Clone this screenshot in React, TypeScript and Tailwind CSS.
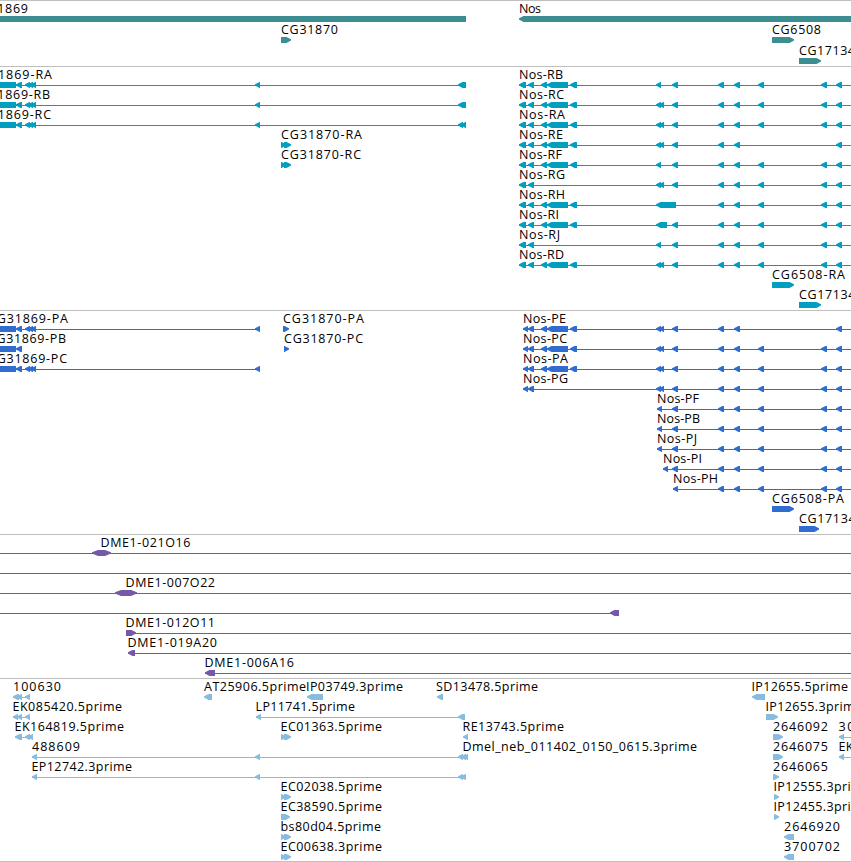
type Exon = [number, number, string?];
type Feature = {
  label?: string;
  x?: number;
  end?: number;
  line?: [number, number];
  exons?: Exon[];
};
type Track = { name: string; color: string; rows: Feature[][] };

// exon directions: L (default), R, B = block without head, D = head on both sides
const HEAD = 4.5;

const tail: Exon[] = [[519, 526], [528, 534]];
const shortTail: Exon[] = [[523, 528], [528, 534]];
const coding: Exon[] = [[541, 547], [547, 568], [570, 577]];
const single: Exon[] = [[656, 661]];
const pair: Exon[] = [[656, 661], [659, 664]];
const mid: Exon[] = [[672, 678]];
const rest: Exon[] = [[718, 724], [734, 740], [758, 764], [821, 827], [836, 842]];
const restShort: Exon[] = [[718, 724], [734, 740], [836, 842]];
const leftEnd: Exon[] = [[-6, 16, 'B'], [16, 22]];
const cluster: Exon[] = [[25, 30], [28, 33], [31, 36]];
const doubleRight: Exon[] = [[281, 286, 'R'], [284, 291, 'R']];

const nos = (label: string, end: number, exons: Exon[], x = 519): Feature => ({
  label, x, end, line: [x, 860], exons
});

const tracks: Track[] = [
  {
    name: 'genes',
    color: '#3D8E93',
    rows: [
      [
        { label: 'CG31869', x: -29, end: 28, exons: [[-6, 466, 'B']] },
        { label: 'Nos', x: 519, end: 541, exons: [[519, 860]] }
      ],
      [
        { label: 'CG31870', x: 281, end: 338, exons: [[281, 291, 'R']] },
        { label: 'CG6508', x: 772, end: 821, exons: [[772, 794, 'R']] }
      ],
      [{ label: 'CG17134', x: 799, end: 855, exons: [[799, 821, 'R']] }]
    ]
  },
  {
    name: 'transcripts',
    color: '#019EC0',
    rows: [
      [
        { label: 'CG31869-RA', x: -29, end: 52, line: [0, 466], exons: [...leftEnd, ...cluster, [255, 260], [458, 466]] },
        nos('Nos-RB', 563, [...tail, ...coding, ...single, ...mid, ...rest])
      ],
      [
        { label: 'CG31869-RB', x: -29, end: 50, line: [0, 466], exons: [...leftEnd, ...cluster, [255, 260], [458, 466]] },
        nos('Nos-RC', 564, [...tail, ...coding, ...pair, ...mid, ...rest])
      ],
      [
        { label: 'CG31869-RC', x: -29, end: 51, line: [0, 466], exons: [...leftEnd, ...cluster, [255, 260], [458, 463], [461, 466]] },
        nos('Nos-RA', 565, [...tail, ...coding, ...pair, ...mid, ...rest])
      ],
      [
        { label: 'CG31870-RA', x: 281, end: 362, exons: doubleRight },
        nos('Nos-RE', 563, [...tail, ...coding, ...pair, ...mid, ...restShort])
      ],
      [
        { label: 'CG31870-RC', x: 281, end: 361, exons: doubleRight },
        nos('Nos-RF', 562, [...tail, ...coding, ...single, ...mid, ...rest])
      ],
      [nos('Nos-RG', 565, [...tail, ...pair, ...mid, ...rest])],
      [nos('Nos-RH', 565, [...tail, ...coding, [656, 676], ...rest])],
      [nos('Nos-RI', 559, [...tail, ...coding, [656, 667], ...mid, ...rest])],
      [nos('Nos-RJ', 560, [...tail, ...single, ...mid, ...rest])],
      [nos('Nos-RD', 564, [...tail, ...coding, ...pair, ...mid, ...rest])],
      [{ label: 'CG6508-RA', x: 772, end: 845, exons: [[772, 794, 'R']] }],
      [{ label: 'CG17134-RA', x: 799, end: 877, exons: [[799, 821, 'R']] }]
    ]
  },
  {
    name: 'proteins',
    color: '#316CCF',
    rows: [
      [
        { label: 'CG31869-PA', x: -12, end: 68, line: [0, 260], exons: [...leftEnd, ...cluster, [255, 260]] },
        { label: 'CG31870-PA', x: 283, end: 364, exons: [[283, 289, 'R']] },
        nos('Nos-PE', 566, [...shortTail, ...coding, ...pair, ...mid, ...restShort], 523)
      ],
      [
        { label: 'CG31869-PB', x: -12, end: 66, exons: leftEnd },
        { label: 'CG31870-PC', x: 284, end: 363, exons: [[284, 289, 'R']] },
        nos('Nos-PC', 567, [...shortTail, ...coding, ...pair, ...mid, ...rest], 523)
      ],
      [
        { label: 'CG31869-PC', x: -12, end: 67, line: [0, 260], exons: [...leftEnd, ...cluster, [255, 260]] },
        nos('Nos-PA', 568, [...shortTail, ...coding, ...pair, ...mid, ...rest], 523)
      ],
      [nos('Nos-PG', 568, [...shortTail, ...pair, ...mid, ...rest], 523)],
      [nos('Nos-PF', 699, [[657, 662], ...mid, ...rest], 657)],
      [nos('Nos-PB', 700, [[657, 662], ...mid, ...rest], 657)],
      [nos('Nos-PJ', 697, [[657, 662], ...mid, ...rest], 657)],
      [nos('Nos-PI', 702, [[663, 668], ...mid, ...rest], 663)],
      [nos('Nos-PH', 718, [[673, 678], ...rest], 673)],
      [{ label: 'CG6508-PA', x: 772, end: 844, exons: [[772, 794, 'R']] }],
      [{ label: 'CG17134-PA', x: 799, end: 877, exons: [[799, 819, 'R']] }]
    ]
  },
  {
    name: 'clones',
    color: '#7558A8',
    rows: [
      [{ label: 'DME1-021O16', x: 100.5, end: 190.5, line: [0, 860], exons: [[92, 111, 'D']] }],
      [{ line: [0, 860] }],
      [{ label: 'DME1-007O22', x: 125.5, end: 215, line: [0, 860], exons: [[115, 137, 'D']] }],
      [{ line: [0, 619], exons: [[610, 619]] }],
      [{ label: 'DME1-012O11', x: 125.5, end: 215, line: [126, 860], exons: [[126, 136, 'R']] }],
      [{ label: 'DME1-019A20', x: 127.5, end: 217, line: [128, 860], exons: [[128, 135]] }],
      [{ label: 'DME1-006A16', x: 204.5, end: 294, line: [205, 860], exons: [[205, 215]] }]
    ]
  },
  {
    name: 'ests',
    color: '#88BCDE',
    rows: [
      [
        { label: '100630', x: 13, end: 61, line: [13, 30], exons: [[13, 19], [17, 22], [25, 30]] },
        { label: 'AT25906.5prime', x: 204, end: 306, exons: [[204, 212]] },
        { label: 'IP03749.3prime', x: 306, end: 403, exons: [[307, 323]] },
        { label: 'SD13478.5prime', x: 436, end: 538, exons: [[437, 443]] },
        { label: 'IP12655.5prime', x: 751.5, end: 848, exons: [[752, 765]] }
      ],
      [
        { label: 'EK085420.5prime', x: 12.5, end: 122, line: [13, 30], exons: [[13, 18], [17, 22], [25, 30]] },
        { label: 'LP11741.5prime', x: 255.5, end: 355, line: [256, 465], exons: [[256, 261], [458, 465]] },
        { label: 'IP12655.3prime', x: 765.5, end: 862, exons: [[766, 778, 'R']] }
      ],
      [
        { label: 'EK164819.5prime', x: 14.5, end: 124, line: [15, 33], exons: [[15, 22], [25, 30], [28, 33]] },
        { label: 'EC01363.5prime', x: 280.5, end: 382, exons: doubleRight },
        { label: 'RE13743.5prime', x: 462.5, end: 564, exons: [[463, 468]] },
        { label: '2646092', x: 773, end: 828, exons: [[773, 783, 'R']] },
        { label: '30', x: 838.5, end: 854.5, line: [839, 860], exons: [[839, 844]] }
      ],
      [
        { label: '488609', x: 32, end: 80, line: [32, 466], exons: [[32, 37], [255, 260], [458, 463], [461, 466]] },
        { label: 'Dmel_neb_011402_0150_0615.3prime', x: 462.5, end: 697, exons: [[463, 468]] },
        { label: '2646075', x: 773, end: 828, exons: [[773, 783, 'R']] },
        { label: 'EK', x: 838.5, end: 853.5, line: [839, 860], exons: [[839, 844]] }
      ],
      [
        { label: 'EP12742.3prime', x: 31.5, end: 132, line: [32, 466], exons: [[32, 37], [255, 260], [458, 463], [461, 466]] },
        { label: '2646065', x: 773, end: 828, exons: [[773, 779, 'R']] }
      ],
      [
        { label: 'EC02038.5prime', x: 280.5, end: 382, exons: doubleRight },
        { label: 'IP12555.3prime', x: 773.5, end: 870, exons: [[774, 779, 'R']] }
      ],
      [
        { label: 'EC38590.5prime', x: 280.5, end: 382, exons: [[281, 290, 'R']] },
        { label: 'IP12455.3prime', x: 773.5, end: 870, exons: [[774, 779, 'R']] }
      ],
      [
        { label: 'bs80d04.5prime', x: 280.5, end: 381, exons: doubleRight },
        { label: '2646920', x: 784, end: 840, exons: [[784, 794]] }
      ],
      [
        { label: 'EC00638.3prime', x: 280.5, end: 382, exons: doubleRight },
        { label: '3700702', x: 784, end: 840, exons: [[784, 794]] }
      ]
    ]
  }
];

function exonPoints([a, b, dir = 'L']: Exon) {
  if (dir === 'B') return `${a},13 ${b},13 ${b},19 ${a},19`;
  if (dir === 'R') return `${a},13 ${b - HEAD},13 ${b},15.3 ${b},16.5 ${b - HEAD},19 ${a},19`;
  if (dir === 'D') return `${a},15.3 ${a + 6},13 ${b - 6},13 ${b},15.3 ${b},16.5 ${b - 6},19 ${a + 6},19 ${a},16.5`;
  return `${a},15.3 ${a + HEAD},13 ${b},13 ${b},19 ${a + HEAD},19 ${a},16.5`;
}

function FeatureGlyph({ feature }: { feature: Feature }) {
  const { label, x = 0, end = 0, line, exons = [] } = feature;
  return (
    <g>
      {line && <rect x={line[0]} y={16} width={line[1] - line[0]} height={1} shapeRendering="crispEdges" />}
      {exons.map((exon, i) => (
        <polygon key={i} points={exonPoints(exon)} />
      ))}
      {label && (
        <text x={x} y={10} textLength={end - x} className="fill-black">{label}</text>
      )}
    </g>
  );
}

export default function App() {
  return (
    <main className="w-[851px] h-[862px] overflow-hidden bg-white font-['Open_Sans',sans-serif] text-[12.5px]">
      {tracks.map(track => (
        <section
          key={track.name}
          className={`border-t border-[#BFBFBF] pt-0.5 ${track.name === 'genes' || track.name === 'ests' ? '' : 'pb-px'}`}
        >
          {track.rows.map((row, i) => (
            <svg
              key={i}
              fill={track.color}
              className={`block w-full overflow-visible ${track.name === 'genes' ? 'h-[21px]' : 'h-5'}`}
            >
              {row.map((feature, j) => (
                <FeatureGlyph key={j} feature={feature} />
              ))}
            </svg>
          ))}
        </section>
      ))}
      <div className="border-t border-[#BFBFBF]" />
    </main>
  );
}
